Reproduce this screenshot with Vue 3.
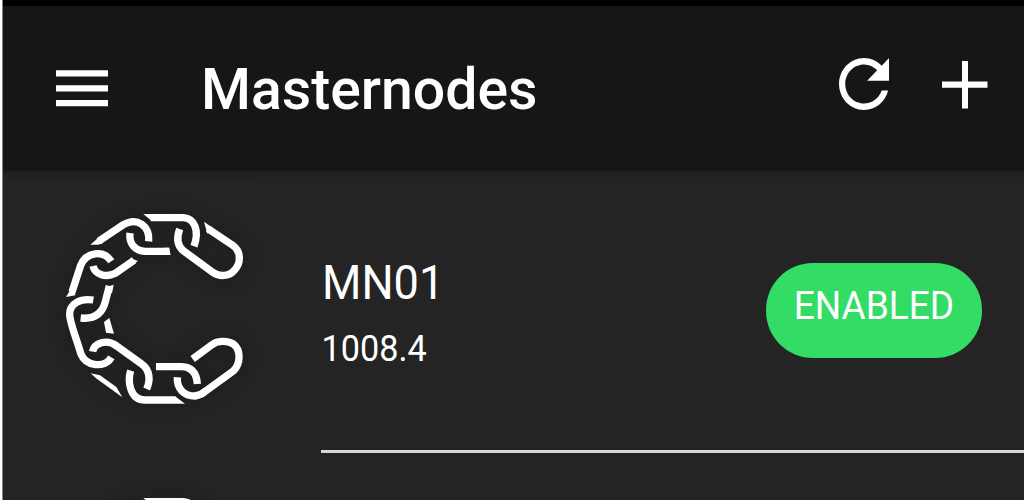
<script setup>
const nodes = [
  { name: 'MN01', balance: '1008.4', status: 'ENABLED' },
  { name: '', balance: '', status: '' }
]
const links = [
  'M474 86 L548 136 C574 154 574 190 552 212 C535 230 508 230 490 218 L402 154 C381 138 379 115 389 87',
  'M302 53 H400 C434 55 449 92 432 139',
  'M358 154 H285 C255 153 236 130 240 99',
  'M146 124 L220 74 C262 50 300 78 296 124',
  'M252 181 L196 220 C168 234 135 224 129 198',
  'M66 276 L92 196 C108 156 160 148 184 184',
  'M178 258 L166 305 C156 345 128 358 92 354',
  'M130 300 C92 294 58 310 59 344 C60 370 76 405 92 460 C108 501 165 505 184 472',
  'M128 455 C132 430 170 415 200 438 L275 492 C300 510 302 540 290 567',
  'M242 512 C232 545 240 600 285 600 H376',
  'M318 500 H395 C425 501 440 520 442 552',
  'M382 532 C380 566 402 588 435 588 C450 586 460 580 470 571 L550 513 C572 492 574 450 550 432 C530 420 500 422 485 435 L428 477'
]
const tips = [
  'M462 65 L488 83 L472 101 Z',
  'M280 42 H306 V64 Z',
  'M121 134 L145 113 L158 130 L144 134 Z',
  'M357 143 L362 165 H340 V143 Z',
  'M240 174 L264 183 L246 196 Z',
  'M72 251 L48 291 L76 286 Z',
  'M168 261 L191 254 L186 280 L164 275 Z',
  'M178 354 L162 366 L168 398 L192 401 Z',
  'M122 520 L150 526 L199 561 L217 592 L138 535 Z',
  'M375 589 L405 611 H375 Z'
]
</script>

<template>
  <main class="screen">
    <div class="status"></div>
    <header class="toolbar">
      <svg class="menu" viewBox="0 0 52 37"><path d="M0 .2H52V6.5H0zM0 15.2H52V21.5H0zM0 30H52V36.2H0z" /></svg>
      <h1><span>Masternodes</span></h1>
      <svg class="refresh" viewBox="4 4 16 16" preserveAspectRatio="none">
        <path d="M17.65 6.35C16.2 4.9 14.21 4 12 4c-4.42 0-7.99 3.58-7.99 8s3.57 8 7.99 8c3.73 0 6.84-2.55 7.73-6h-2.08c-.82 2.33-3.04 4-5.65 4-3.31 0-6-2.69-6-6s2.69-6 6-6c1.66 0 3.14.69 4.22 1.78L13 11h7V4l-2.35 2.35z" />
      </svg>
      <svg class="plus" viewBox="0 0 46 48"><path d="M20 0h6v20.5H45.5v6.3H26V47.5H20V26.8H0v-6.3h20z" /></svg>
    </header>
    <section class="list">
      <article v-for="(node, i) in nodes" :key="i" class="row">
        <svg class="logo" viewBox="0 0 630 645">
          <path v-for="d in links" :key="d" :d="d" class="link" />
          <path v-for="d in tips" :key="d" :d="d" class="tip" />
        </svg>
        <div class="body">
          <div class="info">
            <div class="name"><span>{{ node.name }}</span></div>
            <div class="balance"><span>{{ node.balance }}</span></div>
          </div>
          <div v-if="node.status" class="badge"><span>{{ node.status }}</span></div>
        </div>
      </article>
    </section>
  </main>
</template>

<style>
body { margin: 0; background: #fff; overflow: hidden; }
</style>

<style scoped>
.screen {
  box-sizing: border-box;
  width: 1024px;
  height: 500px;
  overflow: hidden;
  padding-left: 3px;
  background: linear-gradient(90deg, #fff 2px, #858585 2px, #858585 3px, #242424 3px);
  color: #fff;
  font-family: Roboto, sans-serif;
  display: flex;
  flex-direction: column;
}
span { display: inline-block; transform-origin: 0 50%; white-space: nowrap; }
svg { display: block; flex: none; fill: #fff; }
.status { height: 5.5px; flex: none; background: #000; }
.toolbar {
  height: 165.5px;
  flex: none;
  background: #161616;
  display: flex;
  align-items: flex-start;
}
.menu { width: 52px; height: 37px; margin: 64.5px 0 0 53.3px; }
h1 { margin: 49.5px 0 0 93.2px; width: 636.5px; flex: none; font-size: 58px; line-height: 68px; font-weight: 500; }
h1 span { transform: scaleX(.985); }
.refresh { width: 50px; height: 52px; margin: 52.5px 0 0 1px; }
.plus { width: 46px; height: 48px; margin: 55px 0 0 53.5px; }
.list { background: linear-gradient(#1f1f1f, #242424 12px); flex: none; }
.row { height: 283.5px; display: flex; align-items: flex-start; }
.logo {
  width: 210px;
  height: 215px;
  margin: 29px 0 0 47px;
  overflow: visible;
  filter: blur(.7px) drop-shadow(0 0 9px rgba(0, 0, 0, .35));
}
.link { fill: none; stroke: #fff; stroke-width: 22; }
.tip { fill: #fff; }
.body {
  box-sizing: border-box;
  width: 703px;
  height: 281.5px;
  margin-left: 61px;
  border-bottom: 3px solid #d8d8d8;
  display: flex;
}
.info { width: 445px; padding-top: 83.5px; }
.name { height: 56px; font-size: 47.5px; line-height: 56px; }
.name span { transform: translateX(1px) scaleX(.95); }
.balance { height: 42px; margin-top: 17px; font-size: 36px; line-height: 42px; }
.balance span { transform: translateX(.5px) scaleX(.95); }
.badge {
  box-sizing: border-box;
  width: 216px;
  height: 94.5px;
  margin-top: 92px;
  padding: 20px 0 0 27px;
  border-radius: 47px;
  background: #33dc65;
  font-size: 39px;
  line-height: 46px;
}
.badge span { transform: translateX(.7px) scaleX(.95); }
</style>
